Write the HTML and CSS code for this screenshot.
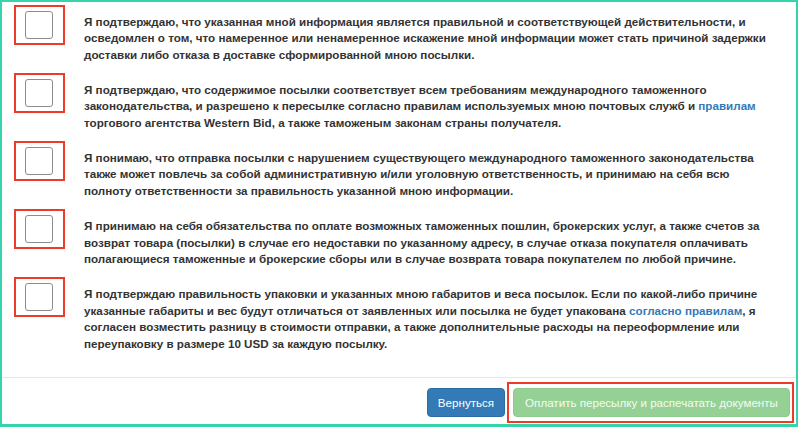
FILE: index.html
```html
<!DOCTYPE html>
<html lang="ru">
<head>
<meta charset="utf-8">
<link rel="stylesheet" href="styles.css">
</head>
<body>
<div class="frame">
  <div class="list">
    <div class="item">
      <div class="mark"><span class="box"></span></div>
      <p class="txt">Я подтверждаю, что указанная мной информация является правильной и соответствующей действительности, и<br>осведомлен о том, что намеренное или ненамеренное искажение мной информации может стать причиной задержки<br>доставки либо отказа в доставке сформированной мною посылки.</p>
    </div>
    <div class="item">
      <div class="mark"><span class="box"></span></div>
      <p class="txt">Я подтверждаю, что содержимое посылки соответствует всем требованиям международного таможенного<br>законодательства, и разрешено к пересылке согласно правилам используемых мною почтовых служб и <a href="#">правилам</a><br>торгового агентства Western Bid, а также таможеным законам страны получателя.</p>
    </div>
    <div class="item">
      <div class="mark"><span class="box"></span></div>
      <p class="txt">Я понимаю, что отправка посылки с нарушением существующего международного таможенного законодательства<br>также может повлечь за собой административную и/или уголовную ответственность, и принимаю на себя всю<br>полноту ответственности за правильность указанной мною информации.</p>
    </div>
    <div class="item">
      <div class="mark"><span class="box"></span></div>
      <p class="txt">Я принимаю на себя обязательства по оплате возможных таможенных пошлин, брокерских услуг, а также счетов за<br>возврат товара (посылки) в случае его недоставки по указанному адресу, в случае отказа покупателя оплачивать<br>полагающиеся таможенные и брокерские сборы или в случае возврата товара покупателем по любой причине.</p>
    </div>
    <div class="item">
      <div class="mark"><span class="box"></span></div>
      <p class="txt">Я подтверждаю правильность упаковки и указанных мною габаритов и веса посылок. Если по какой-либо причине<br>указанные габариты и вес будут отличаться от заявленных или посылка не будет упакована <a href="#">согласно правилам</a>, я<br>согласен возместить разницу в стоимости отправки, а также дополнительные расходы на переоформление или<br>переупаковку в размере 10 USD за каждую посылку.</p>
    </div>
  </div>
  <div class="footer">
    <button class="btn btn-back" type="button">Вернуться</button>
    <div class="hl"><button class="btn btn-pay" type="button" disabled>Оплатить пересылку и распечатать документы</button></div>
  </div>
</div>
</body>
</html>
```
FILE: styles.css
```css
html, body {
  margin: 0;
  padding: 0;
  background: #fff;
}
body {
  font-family: "Liberation Sans", Arial, sans-serif;
  color: #333;
}
.frame {
  box-sizing: border-box;
  width: 798px;
  height: 427px;
  border: 2px solid #36d4aa;
  border-bottom-width: 3px;
  display: flex;
  flex-direction: column;
}
.list {
  padding: 3px 0 0 12px;
  flex: 1;
  display: flex;
  flex-direction: column;
  gap: 9.5px;
}
.item {
  display: flex;
  align-items: flex-start;
}
.mark {
  box-sizing: border-box;
  flex: none;
  width: 51px;
  height: 40px;
  border: 2px solid #ee3a2a;
  padding: 4px 0 0 9px;
}
.box {
  display: block;
  box-sizing: border-box;
  width: 28px;
  height: 28px;
  border: 1px solid #8c8c8c;
  border-radius: 3px;
  background: #fff;
}
.txt {
  margin: 8.5px 0 0 19px;
  font-size: 11.65px;
  line-height: 16.7px;
  font-weight: bold;
  white-space: nowrap;
}
.txt a {
  color: #337ab7;
  text-decoration: none;
}
.footer {
  border-top: 1px solid #e5e5e5;
  display: flex;
  justify-content: flex-end;
  align-items: center;
  gap: 2px;
  padding: 4px 2px 1px 0;
}
.btn {
  font-family: "Liberation Sans", Arial, sans-serif;
  font-size: 11.6px;
  height: 29px;
  border-radius: 4px;
  color: #fff;
  padding: 0;
  line-height: 27px;
  white-space: nowrap;
  text-align: center;
}
.btn-back {
  background: #337ab7;
  border: 1px solid #2e6da4;
  width: 78px;
}
.hl {
  border: 2px solid #ee3a2a;
  padding: 4px 2px 4px 4px;
}
.btn-pay {
  background: #95d195;
  border: 1px solid #8ccd8c;
  width: 277px;
  color: #f4fbf4;
}
```
